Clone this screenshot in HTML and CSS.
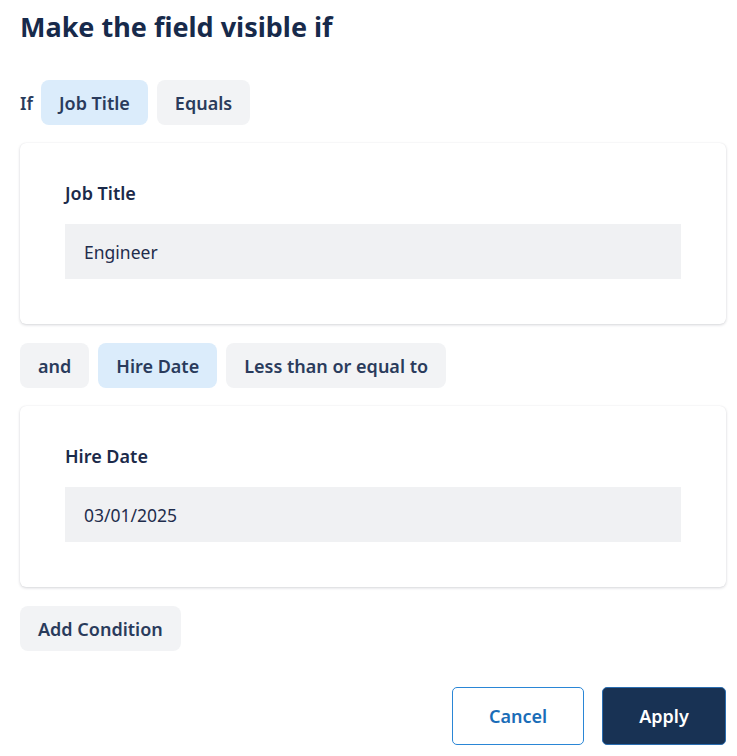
FILE: index.html
```html
<!DOCTYPE html>
<html lang="en">
<head>
<meta charset="utf-8">
<title>Make the field visible if</title>
<link rel="stylesheet" href="styles.css">
</head>
<body>
<div class="panel">
  <h1 class="title">Make the field visible if</h1>

  <div class="chip-row">
    <span class="lead">If</span>
    <span class="chip chip-field">Job Title</span>
    <span class="chip">Equals</span>
  </div>

  <div class="card">
    <div class="field-label">Job Title</div>
    <div class="field-input">Engineer</div>
  </div>

  <div class="chip-row">
    <span class="chip">and</span>
    <span class="chip chip-field">Hire Date</span>
    <span class="chip">Less than or equal to</span>
  </div>

  <div class="card">
    <div class="field-label">Hire Date</div>
    <div class="field-input">03/01/2025</div>
  </div>

  <div class="chip-row">
    <span class="chip">Add Condition</span>
  </div>

  <div class="actions">
    <button class="btn btn-cancel">Cancel</button>
    <button class="btn btn-apply">Apply</button>
  </div>
</div>
</body>
</html>
```

FILE: styles.css
```css
html, body {
  margin: 0;
  padding: 0;
  background: #ffffff;
}

body {
  font-family: "Noto Sans", "Open Sans", "DejaVu Sans", sans-serif;
  color: #1b2a4a;
}

.panel {
  padding: 9px 11px 0 20px;
  display: flex;
  flex-direction: column;
}

.title {
  margin: 0;
  font-size: 27px;
  line-height: 36px;
  font-weight: 700;
  color: #172a4b;
}

.chip-row {
  display: flex;
  align-items: center;
  gap: 9px;
  margin-bottom: 18px;
}

.title + .chip-row {
  margin-top: 35px;
}

.lead {
  font-size: 17.5px;
  font-weight: 600;
  color: #2a3b5c;
  margin-right: -1px;
}

.chip {
  display: inline-flex;
  align-items: center;
  height: 45px;
  padding: 0 18px;
  border-radius: 8px;
  background: #f2f3f5;
  font-size: 18px;
  font-weight: 600;
  color: #2a3b5c;
  box-sizing: border-box;
}

.chip-field {
  background: #dbecfb;
}

.card {
  background: #ffffff;
  border-radius: 6px;
  box-shadow: 0 1px 3px rgba(20, 30, 50, 0.18), 0 0 1px rgba(20, 30, 50, 0.08);
  padding: 39px 45px 45px 45px;
  margin-bottom: 19px;
}

.field-label {
  font-size: 18px;
  line-height: 22px;
  font-weight: 600;
  color: #1b2a4a;
  margin-bottom: 20px;
}

.field-input {
  background: #f0f1f3;
  height: 55px;
  display: flex;
  align-items: center;
  padding: 0 19px;
  font-size: 17.5px;
  color: #1f2d4c;
}

.actions {
  display: flex;
  justify-content: flex-end;
  gap: 18px;
  margin-top: 18px;
}

.btn {
  font-family: inherit;
  font-size: 18px;
  font-weight: 600;
  height: 58px;
  border-radius: 5px;
  cursor: pointer;
  box-sizing: border-box;
}

.btn-cancel {
  width: 132px;
  background: #ffffff;
  border: 1px solid #2a86d6;
  color: #1a6db8;
}

.btn-apply {
  width: 124px;
  background: #183254;
  border: 1px solid #2a6db0;
  color: #ffffff;
}
```
